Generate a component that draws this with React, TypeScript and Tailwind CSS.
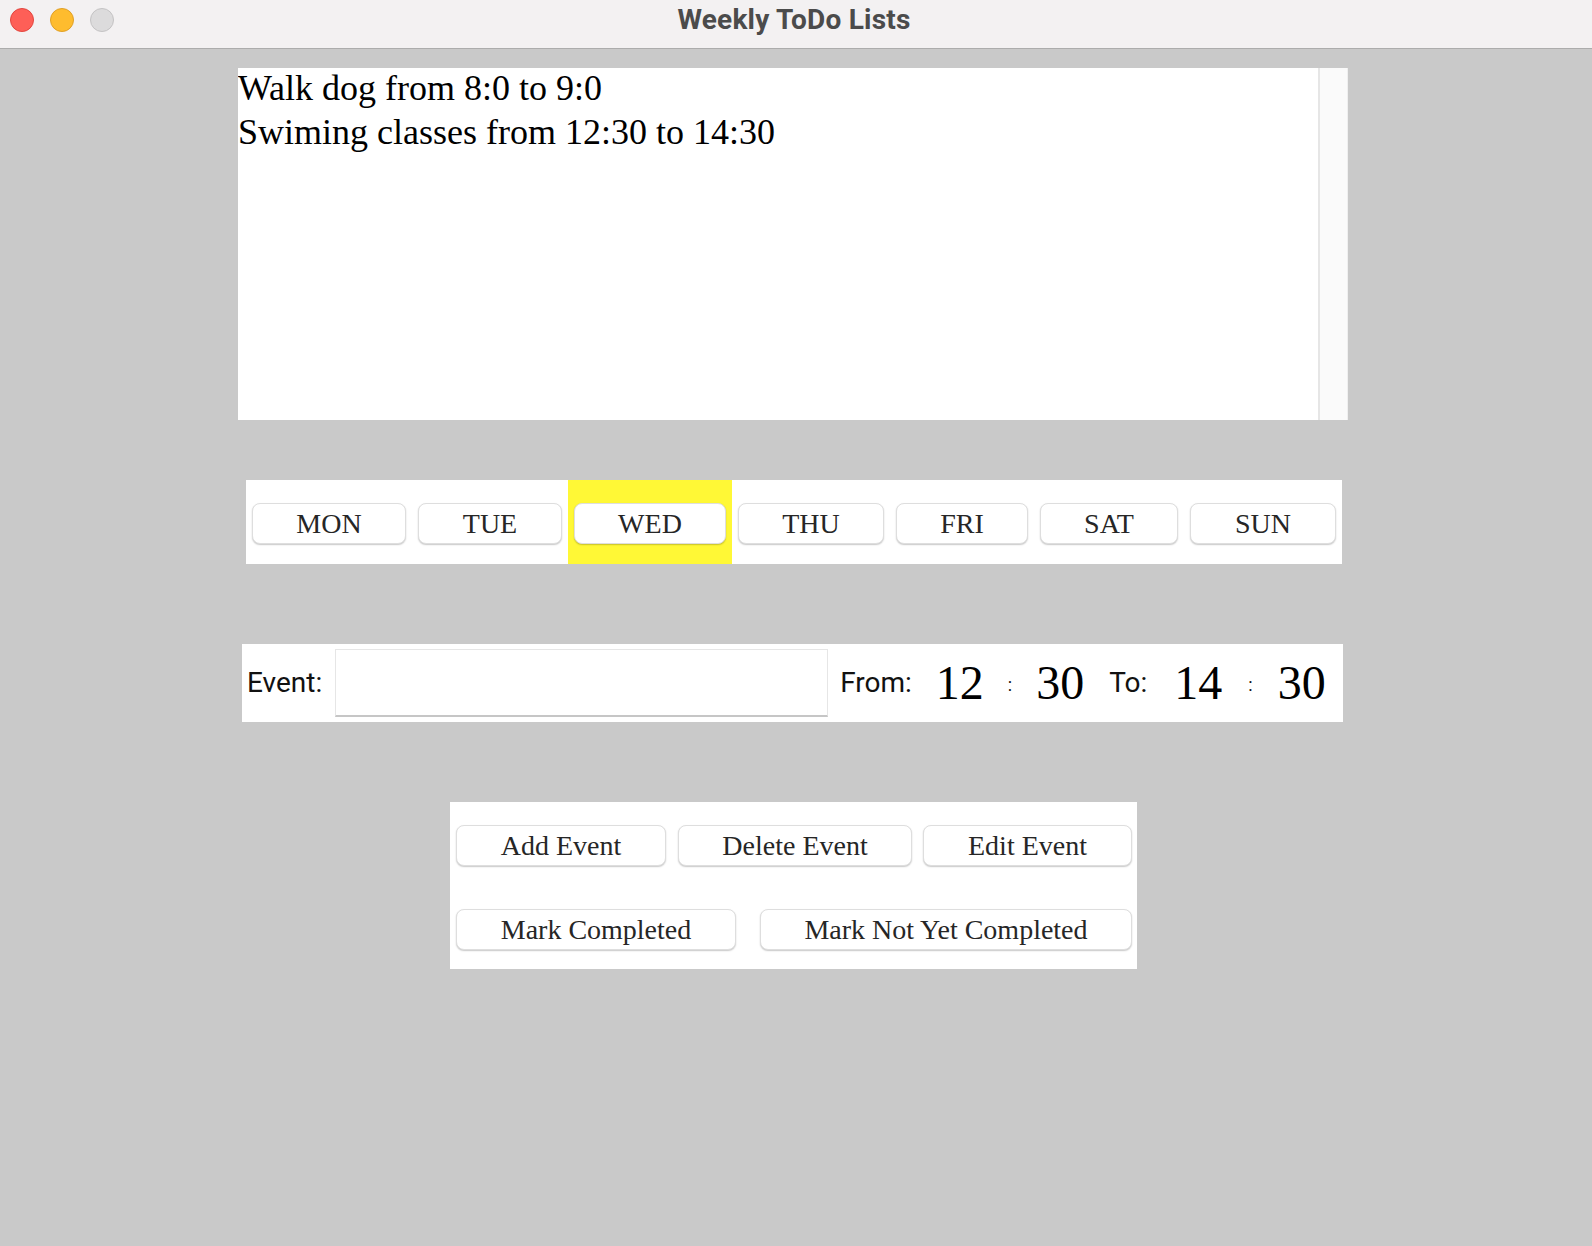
import React from "react";

const serif = "font-['Liberation_Serif','Times_New_Roman',serif]";
const sans = "font-['Roboto','Liberation_Sans',sans-serif]";

const btn =
  "h-[41px] bg-white rounded-[8px] border border-[#dedede] shadow-[0_1px_1.5px_rgba(0,0,0,0.22)] flex items-center justify-center text-[28px] leading-[28px] text-[#262626] font-['Liberation_Serif','Times_New_Roman',serif]";

const days = [
  { n: "MON", w: "w-[154px]", sel: false },
  { n: "TUE", w: "w-[144px]", sel: false },
  { n: "WED", w: "w-[152px]", sel: true },
  { n: "THU", w: "w-[146px]", sel: false },
  { n: "FRI", w: "w-[132px]", sel: false },
  { n: "SAT", w: "w-[138px]", sel: false },
  { n: "SUN", w: "w-[146px]", sel: false },
];

function TitleBar() {
  return (
    <div className="relative w-full h-[49px] bg-[#f3f1f2] border-b border-[#acacac] flex justify-center shrink-0">
      <div className="absolute left-[10px] top-[8px] flex gap-[16px]">
        <div className="w-[24px] h-[24px] rounded-full bg-[#fe5f57] border border-[#e2463f]" />
        <div className="w-[24px] h-[24px] rounded-full bg-[#febc2e] border border-[#e0a026]" />
        <div className="w-[24px] h-[24px] rounded-full bg-[#dcdbdc] border border-[#c4c3c4]" />
      </div>
      <div className={`${sans} pt-[6px] pr-[4px] text-[28px] leading-[28px] font-bold text-[#4b4b4b] tracking-[0.2px]`}>
        Weekly ToDo Lists
      </div>
    </div>
  );
}

export default function App() {
  return (
    <div className="w-[1592px] h-[1246px] bg-[#c9c9c9] flex flex-col items-start overflow-hidden">
      <TitleBar />

      {/* list area */}
      <div className="ml-[238px] mt-[19px] w-[1110px] h-[352px] bg-white flex overflow-hidden shrink-0">
        <div className={`${serif} flex-1 -mt-[2px] text-[36px] leading-[44px] text-black`}>
          <div>Walk dog from 8:0 to 9:0</div>
          <div>Swiming classes from 12:30 to 14:30</div>
        </div>
        <div className="w-[30px] h-full border-l-2 border-[#e6e6e6] bg-[#fafafa] border-r border-r-[#efefef]" />
      </div>

      {/* day selector */}
      <div className="ml-[246px] mt-[60px] h-[84px] bg-white flex shrink-0">
        {days.map((d) => (
          <div
            key={d.n}
            className={`px-[6px] pt-[23px] h-full ${d.sel ? "bg-[#fff836]" : "bg-white"}`}
          >
            <div className={`${btn} ${d.w}`}>{d.n}</div>
          </div>
        ))}
      </div>

      {/* event entry */}
      <div className="ml-[242px] mt-[80px] w-[1101px] h-[78px] bg-white flex items-center shrink-0">
        <div className={`${sans} ml-[5px] text-[28px] leading-[28px] text-[#111]`}>Event:</div>
        <div className="ml-[13px] w-[493px] h-[68px] bg-white border border-[#e6e6e6] border-b-2 border-b-[#c6c6c6]" />
        <div className={`${sans} ml-[12px] text-[28px] leading-[28px] text-[#111]`}>From:</div>
        <div className={`${serif} ml-[24px] text-[48px] leading-[48px] text-black`}>12</div>
        <div className={`${sans} ml-[24px] mt-[4px] text-[18px] leading-[18px] text-[#111]`}>:</div>
        <div className={`${serif} ml-[24px] text-[48px] leading-[48px] text-black`}>30</div>
        <div className={`${sans} ml-[25px] text-[28px] leading-[28px] text-[#111]`}>To:</div>
        <div className={`${serif} ml-[27px] text-[48px] leading-[48px] text-black`}>14</div>
        <div className={`${sans} ml-[26px] mt-[4px] text-[18px] leading-[18px] text-[#111]`}>:</div>
        <div className={`${serif} ml-[25px] text-[48px] leading-[48px] text-black`}>30</div>
      </div>

      {/* actions */}
      <div className="ml-[450px] mt-[80px] w-[687px] h-[167px] bg-white pl-[6px] pt-[23px] flex flex-col shrink-0">
        <div className="flex">
          <div className={`${btn} w-[210px]`}>Add Event</div>
          <div className={`${btn} ml-[12px] w-[234px]`}>Delete Event</div>
          <div className={`${btn} ml-[11px] w-[209px]`}>Edit Event</div>
        </div>
        <div className="flex mt-[43px]">
          <div className={`${btn} w-[280px]`}>Mark Completed</div>
          <div className={`${btn} ml-[24px] w-[372px]`}>Mark Not Yet Completed</div>
        </div>
      </div>
    </div>
  );
}
